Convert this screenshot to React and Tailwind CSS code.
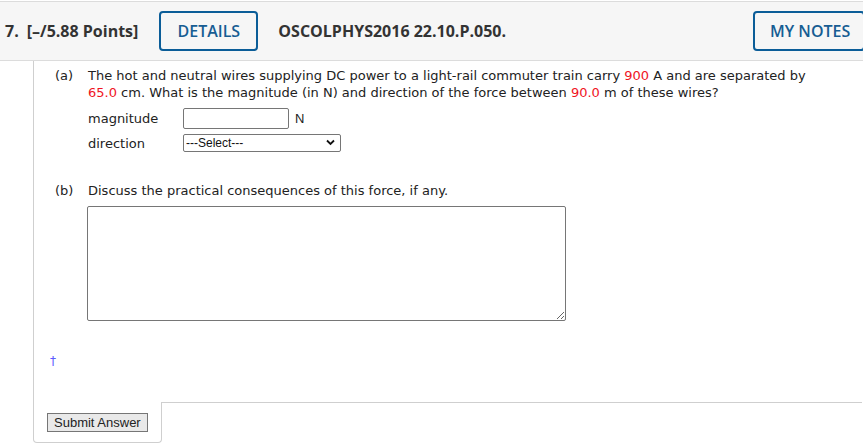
import { useState } from 'react';

const Red = ({ children }) => <span className="text-[#f0141e]">{children}</span>;

const App = () => {
  const [magnitude, setMagnitude] = useState('');
  const [direction, setDirection] = useState('');
  const [discussion, setDiscussion] = useState('');

  return (
    <div className="w-[863px] h-[447px] bg-white overflow-hidden">
      {/* header bar */}
      <div className="mt-px h-[60px] bg-[#f6f6f6] border-y border-[#dcdcdc] flex items-center font-['Open_Sans',sans-serif] text-[#333]">
        <div className="pl-[5px] text-[16px] font-bold flex items-center">
          <span>7.</span>
          <span className="ml-[8px]">[–/5.88 Points]</span>
        </div>
        <button className="ml-[21px] h-[40px] w-[99px] border-2 border-[#0b5d98] rounded-[4px] text-[16px] font-semibold text-[#175d93] bg-white/0">
          DETAILS
        </button>
        <div className="ml-[20px] text-[16px] font-bold">OSCOLPHYS2016 22.10.P.050.</div>
        <button className="ml-auto -mr-[2px] h-[40px] w-[112px] border-2 border-[#0b5d98] rounded-[4px] text-[16px] font-semibold text-[#175d93] text-left">
          <span className="pl-[15px]">MY NOTES</span>
        </button>
      </div>

      {/* question body */}
      <div className="ml-[33px] border-l border-[#cfcfcf] h-[341px] font-['DejaVu_Sans',Verdana,sans-serif] text-[13px] text-[#222] leading-[17px]">
        <div className="pt-[6px] flex">
          <div className="w-[54px] pl-[21px]">(a)</div>
          <div className="w-[740px]">
            The hot and neutral wires supplying DC power to a light-rail commuter train carry <Red>900</Red> A and are separated by <Red>65.0</Red> cm. What is the magnitude (in N) and direction of the force between <Red>90.0</Red> m of these wires?
            <div className="mt-[7px] grid grid-cols-[95px_auto] gap-y-[5px] items-center">
              <span>magnitude</span>
              <div className="flex items-center">
                <input
                  value={magnitude}
                  onChange={(e) => setMagnitude(e.target.value)}
                  className="w-[106px] h-[21px] border border-[#767676] rounded-[2px] outline-none px-1"
                />
                <span className="ml-[6px] font-['Liberation_Sans',Arial,sans-serif]">N</span>
              </div>
              <span>direction</span>
              <div className="relative w-[158px] h-[18px]">
                <select
                  value={direction}
                  onChange={(e) => setDirection(e.target.value)}
                  className="appearance-none w-full h-full border border-[#767676] rounded-[2px] pl-[2px] text-[12px] leading-[16px] font-['Liberation_Sans',Arial,sans-serif] text-[#111] bg-white outline-none"
                >
                  <option value="">---Select---</option>
                  <option value="attract">attractive</option>
                  <option value="repel">repulsive</option>
                </select>
                <svg className="absolute right-[6px] top-[5px] pointer-events-none" width="9" height="7" viewBox="0 0 9 7">
                  <path d="M1 1.5 L4.5 5 L8 1.5" fill="none" stroke="#111" strokeWidth="1.8" />
                </svg>
              </div>
            </div>
          </div>
        </div>

        <div className="mt-[30px] flex">
          <div className="w-[54px] pl-[21px]">(b)</div>
          <div>
            Discuss the practical consequences of this force, if any.
            <textarea
              value={discussion}
              onChange={(e) => setDiscussion(e.target.value)}
              className="block mt-[7px] w-[479px] h-[115px] border border-[#767676] rounded-[2px] outline-none -ml-px"
            />
          </div>
        </div>

        <div className="mt-[32px] pl-[16px] text-[#5b5bff] text-[12px]">†</div>
      </div>

      {/* submit row */}
      <div className="flex">
        <div className="ml-[33px] w-[129px] h-[41px] border-l border-r border-b border-[#cfcfcf] rounded-b-[4px] pl-[13px] pt-[11px] flex items-start">
          <button className="h-[19px] px-[6px] border border-[#767676] bg-[#e9e9e9] text-[13px] leading-[15px] text-[#222] font-['Liberation_Sans',Arial,sans-serif]">
            Submit Answer
          </button>
        </div>
        <div className="flex-1 border-t border-[#cfcfcf] -ml-px mr-px" />
      </div>
    </div>
  );
};

export default App;
